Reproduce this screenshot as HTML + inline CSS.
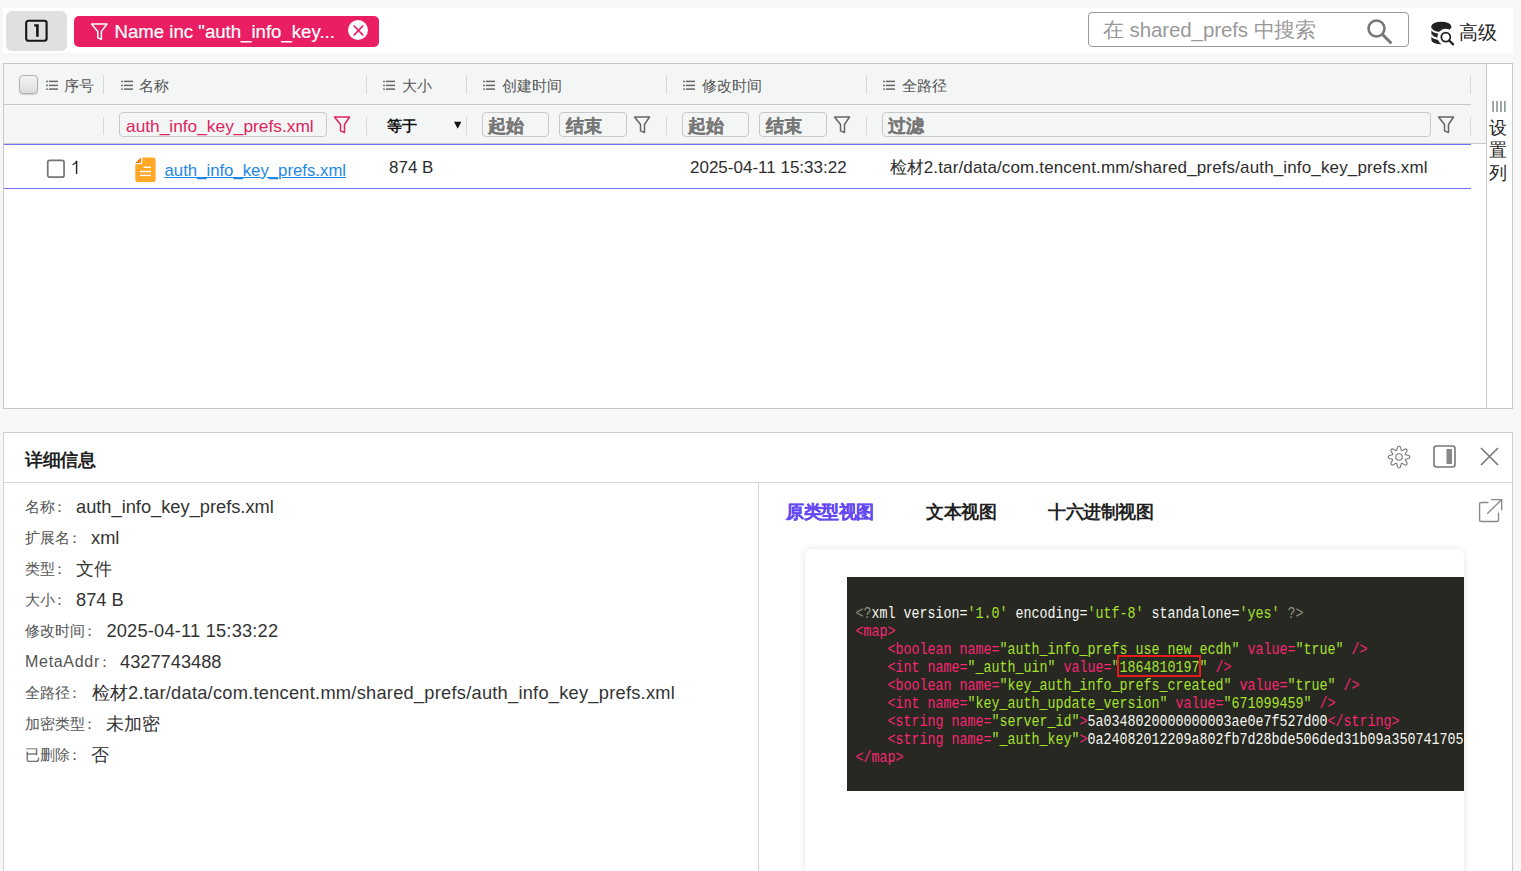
<!DOCTYPE html>
<html><head><meta charset="utf-8">
<style>
*{box-sizing:border-box;}
html,body{margin:0;padding:0;}
body{width:1521px;height:871px;overflow:hidden;background:#f7f7f7;font-family:"Liberation Sans",sans-serif;color:#222;position:relative;}
.a{position:absolute;white-space:nowrap;}
/* top bar */
#top{left:3px;top:8px;width:1510px;height:45px;background:#fff;}
#pagebtn{left:6px;top:11px;width:61px;height:40px;background:#e0e0e0;border-radius:6px;}
#pageicon{left:26px;top:20px;width:21px;height:21px;border:3px solid #222;border-radius:2px;}
#chip{left:74px;top:16px;width:305px;height:31px;background:#e91e63;border-radius:5px;}
#chiptxt{left:114.5px;top:20px;font-size:18.62px;color:#fff;-webkit-text-stroke:0.2px #fff;line-height:24px;}
#chipx{left:348px;top:20.2px;width:20px;height:20px;border-radius:50%;background:#fff;}
#search{left:1088px;top:12px;width:321px;height:35px;border:1px solid #9a9a9a;border-radius:4px;background:#fff;}
#searchtxt{left:1103px;top:17px;font-size:20.5px;letter-spacing:-0.1px;color:#999;line-height:26px;}
#adv{left:1459px;top:20.5px;font-size:19px;color:#222;line-height:24px;}
/* table */
#tbl{left:3px;top:63px;width:1510px;height:346px;border:1px solid #c3c8cc;background:#fff;}
#hdr{left:4px;top:64px;width:1482px;height:80px;background:#f4f6f5;}
#hline{left:4px;top:104px;width:1467px;height:1px;background:#c3c8cc;}
#fline{left:4px;top:143px;width:1482px;height:1px;background:#c8ccc9;}
#pline1{left:4px;top:144px;width:1467px;height:1px;background:#7070fa;}
#pline2{left:4px;top:188px;width:1467px;height:1px;background:#7070fa;}
#setcol{left:1486px;top:64px;width:1px;height:344px;background:#c3c8cc;}
.hd{font-size:15.3px;color:#555;line-height:20px;top:76px;}
.dv{width:1px;background:#d5d9dc;}
.inp{height:25px;border:1px solid #c8c8c8;border-radius:4px;top:112px;}
.ph{font-size:18px;font-weight:900;color:#777;line-height:22px;top:115px;-webkit-text-stroke:0.25px #777;}
.cell{font-size:17px;color:#2e2e2e;line-height:22px;top:157px;}
/* details */
#det{left:3px;top:432px;width:1510px;height:450px;border:1px solid #d0d0d0;background:#fff;}
#detline{left:4px;top:482px;width:1508px;height:1px;background:#d6d6d6;}
#detv{left:758px;top:483px;width:1px;height:400px;background:#d6d6d6;}
#dettitle{left:25px;top:448px;font-size:18px;letter-spacing:-0.5px;font-weight:bold;color:#222;line-height:24px;}
.lb{font-size:15px;color:#555;line-height:20px;left:25px;}
.vl{font-size:18.25px;color:#333;line-height:24px;margin-top:0.5px;}
.tab{font-size:18px;letter-spacing:-0.5px;font-weight:bold;line-height:24px;top:500px;color:#222;}
#card{left:805px;top:549px;width:659px;height:340px;background:#fff;border-radius:6px;box-shadow:0 0 6px rgba(0,0,0,0.11);}
#code{left:847px;top:577px;width:617px;height:214px;background:#272822;overflow:hidden;}
#codepre{position:absolute;left:8.5px;top:27.5px;margin:0;font-family:"Liberation Mono",monospace;font-size:13.34px;line-height:15px;transform:scaleY(1.2);transform-origin:0 0;color:#f8f8f2;white-space:pre;}
.p{color:#f92672;}.g{color:#a6e22e;}.m{color:#8f8f80;}
#redbox{left:1117px;top:654.5px;width:84px;height:22px;border:2.2px solid #e41b1b;}
</style></head><body>
<div class="a" id="top"></div>
<div class="a" id="pagebtn"></div>
<svg class="a" style="left:25px;top:19px" width="23" height="23" viewBox="0 0 23 23"><rect x="1.2" y="1.8" width="20.4" height="20" rx="2.2" fill="none" stroke="#151515" stroke-width="2.1"/><path d="M9.2 5.2h4.5v12.5h-2.6v-10.2h-1.9z" fill="#151515"/></svg>
<div class="a" id="chip"></div>
<svg class="a" style="left:90px;top:22px" width="19" height="19" viewBox="0 0 19 19"><path d="M1.6 2h15.4l-5.6 7.4v8l-3.6 -1.6v-6.4z" fill="none" stroke="#fff" stroke-width="1.5" stroke-linejoin="round"/></svg>
<div class="a" id="chiptxt">Name inc "auth_info_key...</div>
<div class="a" id="chipx"></div>
<svg class="a" style="left:348px;top:20px" width="21" height="21" viewBox="0 0 21 21"><path d="M6.2 6l8.6 8.8M14.8 6l-8.6 8.8" stroke="#e91e63" stroke-width="1.7" stroke-linecap="round"/></svg>

<div class="a" id="search"></div>
<div class="a" id="searchtxt">在 shared_prefs 中搜索</div>
<svg class="a" style="left:1366px;top:18px" width="27" height="27" viewBox="0 0 27 27"><circle cx="10.5" cy="10.5" r="8" fill="none" stroke="#777" stroke-width="2.6"/><path d="M16.5 16.5l8 8" stroke="#777" stroke-width="3" stroke-linecap="round"/></svg>
<svg class="a" style="left:1425px;top:15px" width="35" height="35" viewBox="0 0 35 35"><path d="M6.4 11.15V24.9A9.9 4.45 0 0 0 26.2 24.9V11.15Z" fill="#222"/><ellipse cx="16.3" cy="11.15" rx="9.9" ry="4.45" fill="#222"/><path d="M6.4 13.5A9.9 4.45 0 0 0 26.2 13.5" fill="none" stroke="#fff" stroke-width="1.7"/><path d="M6.4 19.6A9.9 4.45 0 0 0 26.2 19.6" fill="none" stroke="#fff" stroke-width="2"/><circle cx="20.8" cy="22.1" r="8.4" fill="#fff"/><circle cx="20.8" cy="22.1" r="4.5" fill="none" stroke="#222" stroke-width="1.8"/><path d="M24.2 25.5L28.1 29.4" stroke="#222" stroke-width="2.2" stroke-linecap="round"/></svg>
<div class="a" id="adv">高级</div>

<!-- table -->
<div class="a" id="tbl"></div>
<div class="a" id="hdr"></div>
<div class="a" id="hline"></div>
<div class="a" id="fline"></div>
<div class="a" id="pline1"></div>
<div class="a" id="pline2"></div>
<div class="a" id="setcol"></div>

<!-- header checkbox -->
<div class="a" style="left:19px;top:75px;width:19px;height:19px;border:1px solid #b0b0b0;border-radius:4px;background:linear-gradient(#f4f4f4,#dcdcdc);box-shadow:0 1px 1px rgba(0,0,0,0.15);"></div>
<svg width="0" height="0" style="position:absolute"><defs><g id="li" fill="#666"><circle cx="1" cy="1.4" r="0.95"/><circle cx="1" cy="5.4" r="0.95"/><circle cx="1" cy="9.1" r="0.95"/><rect x="2.9" y="0.65" width="9.2" height="1.5"/><rect x="2.9" y="4.65" width="9.2" height="1.5"/><rect x="2.9" y="8.35" width="9.2" height="1.5"/></g>
<g id="fn"><path d="M1.5 2h15l-5 7.5v8l-4 -1.6v-6.4z" fill="none" stroke-width="1.5" stroke-linejoin="round"/></g></defs></svg>
<svg class="a" style="left:46px;top:80px" width="12" height="10"><use href="#li"/></svg>
<div class="a hd" style="left:64px;">序号</div>
<div class="a dv" style="left:103px;top:75px;height:19px;"></div>
<svg class="a" style="left:121px;top:80px" width="12" height="10"><use href="#li"/></svg>
<div class="a hd" style="left:139px;">名称</div>
<div class="a dv" style="left:366px;top:75px;height:19px;"></div>
<svg class="a" style="left:383px;top:80px" width="12" height="10"><use href="#li"/></svg>
<div class="a hd" style="left:402px;">大小</div>
<div class="a dv" style="left:466px;top:75px;height:19px;"></div>
<svg class="a" style="left:483px;top:80px" width="12" height="10"><use href="#li"/></svg>
<div class="a hd" style="left:502px;">创建时间</div>
<div class="a dv" style="left:666px;top:75px;height:19px;"></div>
<svg class="a" style="left:683px;top:80px" width="12" height="10"><use href="#li"/></svg>
<div class="a hd" style="left:702px;">修改时间</div>
<div class="a dv" style="left:866px;top:75px;height:19px;"></div>
<svg class="a" style="left:883px;top:80px" width="12" height="10"><use href="#li"/></svg>
<div class="a hd" style="left:902px;">全路径</div>
<div class="a dv" style="left:1470px;top:75px;height:19px;"></div>

<!-- filter row -->
<div class="a dv" style="left:103px;top:117px;height:18px;"></div>
<div class="a inp" style="left:119px;width:208px;"></div>
<div class="a" style="left:126px;top:115px;font-size:17.32px;color:#e0245e;line-height:22px;">auth_info_key_prefs.xml</div>
<svg class="a" style="left:333px;top:115px" width="18" height="19"><use href="#fn" stroke="#e0245e"/></svg>
<div class="a dv" style="left:366px;top:117px;height:18px;"></div>
<div class="a" style="left:387px;top:116px;font-size:15px;font-weight:bold;color:#111;line-height:20px;">等于</div>
<svg class="a" style="left:453px;top:121px" width="10" height="9"><path d="M1 0.8H8.4L4.7 7.8Z" fill="#111"/></svg>
<div class="a dv" style="left:466px;top:117px;height:18px;"></div>
<div class="a inp" style="left:482px;width:67px;"></div>
<div class="a ph" style="left:488px;">起始</div>
<div class="a inp" style="left:559px;width:68px;"></div>
<div class="a ph" style="left:566px;">结束</div>
<svg class="a" style="left:633px;top:115px" width="18" height="19"><use href="#fn" stroke="#666"/></svg>
<div class="a dv" style="left:666px;top:117px;height:18px;"></div>
<div class="a inp" style="left:682px;width:67px;"></div>
<div class="a ph" style="left:688px;">起始</div>
<div class="a inp" style="left:759px;width:68px;"></div>
<div class="a ph" style="left:766px;">结束</div>
<svg class="a" style="left:833px;top:115px" width="18" height="19"><use href="#fn" stroke="#666"/></svg>
<div class="a dv" style="left:866px;top:117px;height:18px;"></div>
<div class="a inp" style="left:882px;width:549px;"></div>
<div class="a ph" style="left:888px;">过滤</div>
<svg class="a" style="left:1437px;top:115px" width="18" height="19"><use href="#fn" stroke="#666"/></svg>
<div class="a dv" style="left:1470px;top:117px;height:18px;"></div>

<!-- settings column -->
<svg class="a" style="left:1492px;top:101px" width="15" height="11"><g fill="#8f9b9b"><rect x="0.3" y="0" width="1.7" height="11"/><rect x="4.2" y="0" width="1.7" height="11"/><rect x="8.1" y="0" width="1.7" height="11"/><rect x="12" y="0" width="1.7" height="11"/></g></svg>
<div class="a" style="left:1489px;top:116.5px;font-size:18px;line-height:22.5px;color:#222;white-space:normal;width:20px;">设置列</div>

<!-- data row -->
<svg class="a" style="left:46px;top:159px" width="20" height="20"><rect x="1.75" y="1.35" width="16.3" height="16.8" rx="2" fill="#fff" stroke="#747474" stroke-width="1.7"/></svg>
<svg class="a" style="left:72px;top:160px" width="7" height="15"><path d="M4.6 1V14" stroke="#222" stroke-width="1.4" fill="none"/><path d="M1 4.5Q3.2 3.6 4.8 1.2" stroke="#222" stroke-width="1.3" fill="none" stroke-linecap="round"/></svg>
<svg class="a" style="left:135px;top:157px" width="21" height="26" viewBox="0 0 21 26"><path d="M7.3 0.6H18Q20.6 0.6 20.6 3.2V22.4Q20.6 25 18 25H2.9Q0.3 25 0.3 22.4V7.3H5.3Q7.3 7.3 7.3 5.3Z" fill="#ffa726"/><path d="M0.3 6L6 0.5V4.5Q6 6 4.5 6Z" fill="#f57c00"/><rect x="8.6" y="9.6" width="7.4" height="1.4" fill="#fff"/><rect x="5" y="13.8" width="11" height="1.4" fill="#fff"/><rect x="5" y="17.7" width="11" height="1.4" fill="#fff"/></svg>
<div class="a cell" style="left:164.5px;top:159.5px;font-size:16.76px;color:#1e88e5;text-decoration:underline;">auth_info_key_prefs.xml</div>
<div class="a cell" style="left:389px;">874 B</div>
<div class="a cell" style="left:690px;">2025-04-11 15:33:22</div>
<div class="a cell" style="left:889.5px;letter-spacing:0.14px;">检材2.tar/data/com.tencent.mm/shared_prefs/auth_info_key_prefs.xml</div>

<!-- details panel -->
<div class="a" id="det"></div>
<div class="a" id="detline"></div>
<div class="a" id="detv"></div>
<div class="a" id="dettitle">详细信息</div>
<svg class="a" style="left:1387px;top:445px" width="24" height="24" viewBox="0 0 24 24"><path d="M12.00 1.30 L12.28 1.30 L12.56 1.31 L12.84 1.33 L13.09 1.63 L13.31 2.03 L13.51 2.48 L13.68 2.96 L13.82 3.45 L13.94 3.94 L14.04 4.39 L14.13 4.80 L14.23 5.15 L14.33 5.43 L14.45 5.62 L14.60 5.72 L14.78 5.76 L15.00 5.71 L15.27 5.58 L15.58 5.40 L15.94 5.18 L16.33 4.93 L16.76 4.67 L17.21 4.42 L17.67 4.20 L18.12 4.02 L18.56 3.89 L18.95 3.86 L19.16 4.05 L19.37 4.24 L19.57 4.43 L19.76 4.63 L19.95 4.84 L20.14 5.05 L20.11 5.44 L19.98 5.88 L19.80 6.33 L19.58 6.79 L19.33 7.24 L19.07 7.67 L18.82 8.06 L18.60 8.42 L18.42 8.73 L18.29 9.00 L18.24 9.22 L18.28 9.40 L18.38 9.55 L18.57 9.67 L18.85 9.77 L19.20 9.87 L19.61 9.96 L20.06 10.06 L20.55 10.18 L21.04 10.32 L21.52 10.49 L21.97 10.69 L22.37 10.91 L22.67 11.16 L22.69 11.44 L22.70 11.72 L22.70 12.00 L22.70 12.28 L22.69 12.56 L22.67 12.84 L22.37 13.09 L21.97 13.31 L21.52 13.51 L21.04 13.68 L20.55 13.82 L20.06 13.94 L19.61 14.04 L19.20 14.13 L18.85 14.23 L18.57 14.33 L18.38 14.45 L18.28 14.60 L18.24 14.78 L18.29 15.00 L18.42 15.27 L18.60 15.58 L18.82 15.94 L19.07 16.33 L19.33 16.76 L19.58 17.21 L19.80 17.67 L19.98 18.12 L20.11 18.56 L20.14 18.95 L19.95 19.16 L19.76 19.37 L19.57 19.57 L19.37 19.76 L19.16 19.95 L18.95 20.14 L18.56 20.11 L18.12 19.98 L17.67 19.80 L17.21 19.58 L16.76 19.33 L16.33 19.07 L15.94 18.82 L15.58 18.60 L15.27 18.42 L15.00 18.29 L14.78 18.24 L14.60 18.28 L14.45 18.38 L14.33 18.57 L14.23 18.85 L14.13 19.20 L14.04 19.61 L13.94 20.06 L13.82 20.55 L13.68 21.04 L13.51 21.52 L13.31 21.97 L13.09 22.37 L12.84 22.67 L12.56 22.69 L12.28 22.70 L12.00 22.70 L11.72 22.70 L11.44 22.69 L11.16 22.67 L10.91 22.37 L10.69 21.97 L10.49 21.52 L10.32 21.04 L10.18 20.55 L10.06 20.06 L9.96 19.61 L9.87 19.20 L9.77 18.85 L9.67 18.57 L9.55 18.38 L9.40 18.28 L9.22 18.24 L9.00 18.29 L8.73 18.42 L8.42 18.60 L8.06 18.82 L7.67 19.07 L7.24 19.33 L6.79 19.58 L6.33 19.80 L5.88 19.98 L5.44 20.11 L5.05 20.14 L4.84 19.95 L4.63 19.76 L4.43 19.57 L4.24 19.37 L4.05 19.16 L3.86 18.95 L3.89 18.56 L4.02 18.12 L4.20 17.67 L4.42 17.21 L4.67 16.76 L4.93 16.33 L5.18 15.94 L5.40 15.58 L5.58 15.27 L5.71 15.00 L5.76 14.78 L5.72 14.60 L5.62 14.45 L5.43 14.33 L5.15 14.23 L4.80 14.13 L4.39 14.04 L3.94 13.94 L3.45 13.82 L2.96 13.68 L2.48 13.51 L2.03 13.31 L1.63 13.09 L1.33 12.84 L1.31 12.56 L1.30 12.28 L1.30 12.00 L1.30 11.72 L1.31 11.44 L1.33 11.16 L1.63 10.91 L2.03 10.69 L2.48 10.49 L2.96 10.32 L3.45 10.18 L3.94 10.06 L4.39 9.96 L4.80 9.87 L5.15 9.77 L5.43 9.67 L5.62 9.55 L5.72 9.40 L5.76 9.22 L5.71 9.00 L5.58 8.73 L5.40 8.42 L5.18 8.06 L4.93 7.67 L4.67 7.24 L4.42 6.79 L4.20 6.33 L4.02 5.88 L3.89 5.44 L3.86 5.05 L4.05 4.84 L4.24 4.63 L4.43 4.43 L4.63 4.24 L4.84 4.05 L5.05 3.86 L5.44 3.89 L5.88 4.02 L6.33 4.20 L6.79 4.42 L7.24 4.67 L7.67 4.93 L8.06 5.18 L8.42 5.40 L8.73 5.58 L9.00 5.71 L9.22 5.76 L9.40 5.72 L9.55 5.62 L9.67 5.43 L9.77 5.15 L9.87 4.80 L9.96 4.39 L10.06 3.94 L10.18 3.45 L10.32 2.96 L10.49 2.48 L10.69 2.03 L10.91 1.63 L11.16 1.33 L11.44 1.31 L11.72 1.30Z" fill="none" stroke="#777" stroke-width="1.1" stroke-linejoin="round"/><circle cx="12" cy="12" r="3.2" fill="none" stroke="#777" stroke-width="1.1"/></svg>
<svg class="a" style="left:1433px;top:445px" width="23" height="23" viewBox="0 0 23 23"><rect x="1" y="1" width="21" height="21" rx="2.5" fill="none" stroke="#777" stroke-width="1.6"/><rect x="13.5" y="4" width="5.5" height="15" fill="#888"/></svg>
<svg class="a" style="left:1480px;top:447px" width="19" height="19" viewBox="0 0 19 19"><path d="M1 1l17 17M18 1l-17 17" stroke="#777" stroke-width="1.6"/></svg>

<div class="a lb" style="top:497px;">名称<span style="position:relative;left:-3px">：</span></div><div class="a vl" style="left:76px;top:494px;">auth_info_key_prefs.xml</div>
<div class="a lb" style="top:528px;">扩展名<span style="position:relative;left:-3px">：</span></div><div class="a vl" style="left:91px;top:525px;">xml</div>
<div class="a lb" style="top:559px;">类型<span style="position:relative;left:-3px">：</span></div><div class="a vl" style="left:76px;top:556px;">文件</div>
<div class="a lb" style="top:590px;">大小<span style="position:relative;left:-3px">：</span></div><div class="a vl" style="left:76px;top:587px;">874 B</div>
<div class="a lb" style="top:621px;">修改时间<span style="position:relative;left:-3px">：</span></div><div class="a vl" style="left:106.4px;top:618px;letter-spacing:0.2px;">2025-04-11 15:33:22</div>
<div class="a lb" style="top:652px;"><span style="letter-spacing:0.7px;font-size:16px">MetaAddr</span><span style="position:relative;left:-3px">：</span></div><div class="a vl" style="left:120px;top:649px;">4327743488</div>
<div class="a lb" style="top:683px;">全路径<span style="position:relative;left:-3px">：</span></div><div class="a vl" style="left:91.5px;top:680px;letter-spacing:0.25px;">检材2.tar/data/com.tencent.mm/shared_prefs/auth_info_key_prefs.xml</div>
<div class="a lb" style="top:714px;">加密类型<span style="position:relative;left:-3px">：</span></div><div class="a vl" style="left:106px;top:711px;">未加密</div>
<div class="a lb" style="top:745px;">已删除<span style="position:relative;left:-3px">：</span></div><div class="a vl" style="left:91px;top:742px;">否</div>

<div class="a tab" style="left:786px;color:#6448f4;-webkit-text-stroke:0.2px #6448f4;">原类型视图</div>
<div class="a tab" style="left:926px;">文本视图</div>
<div class="a tab" style="left:1048px;">十六进制视图</div>
<svg class="a" style="left:1470px;top:490px" width="40" height="40" viewBox="0 0 40 40"><path d="M18.4 12.5H11.1Q9.6 12.5 9.6 14V30Q9.6 31.5 11.1 31.5H27Q28.5 31.5 28.5 30V22.5" fill="none" stroke="#888" stroke-width="1.35"/><path d="M21.1 9.6H31.7V20.2M31.7 9.6L17.2 23.7" fill="none" stroke="#888" stroke-width="1.35"/></svg>

<div class="a" id="card"></div>
<div class="a" id="code"><pre id="codepre"><span class="m">&lt;?</span>xml version=<span class="g">'1.0'</span> encoding=<span class="g">'utf-8'</span> standalone=<span class="g">'yes'</span> <span class="m">?&gt;</span>
<span class="p">&lt;map&gt;</span>
    <span class="p">&lt;boolean name=</span><span class="g">"auth_info_prefs_use_new_ecdh"</span> <span class="p">value=</span><span class="g">"true"</span> <span class="p">/&gt;</span>
    <span class="p">&lt;int name=</span><span class="g">"_auth_uin"</span> <span class="p">value=</span><span class="g">"1864810197"</span> <span class="p">/&gt;</span>
    <span class="p">&lt;boolean name=</span><span class="g">"key_auth_info_prefs_created"</span> <span class="p">value=</span><span class="g">"true"</span> <span class="p">/&gt;</span>
    <span class="p">&lt;int name=</span><span class="g">"key_auth_update_version"</span> <span class="p">value=</span><span class="g">"671099459"</span> <span class="p">/&gt;</span>
    <span class="p">&lt;string name=</span><span class="g">"server_id"</span><span class="p">&gt;</span>5a0348020000000003ae0e7f527d00<span class="p">&lt;/string&gt;</span>
    <span class="p">&lt;string name=</span><span class="g">"_auth_key"</span><span class="p">&gt;</span>0a24082012209a802fb7d28bde506ded31b09a350741705
<span class="p">&lt;/map&gt;</span></pre></div>
<div class="a" id="redbox"></div>
</body></html>
